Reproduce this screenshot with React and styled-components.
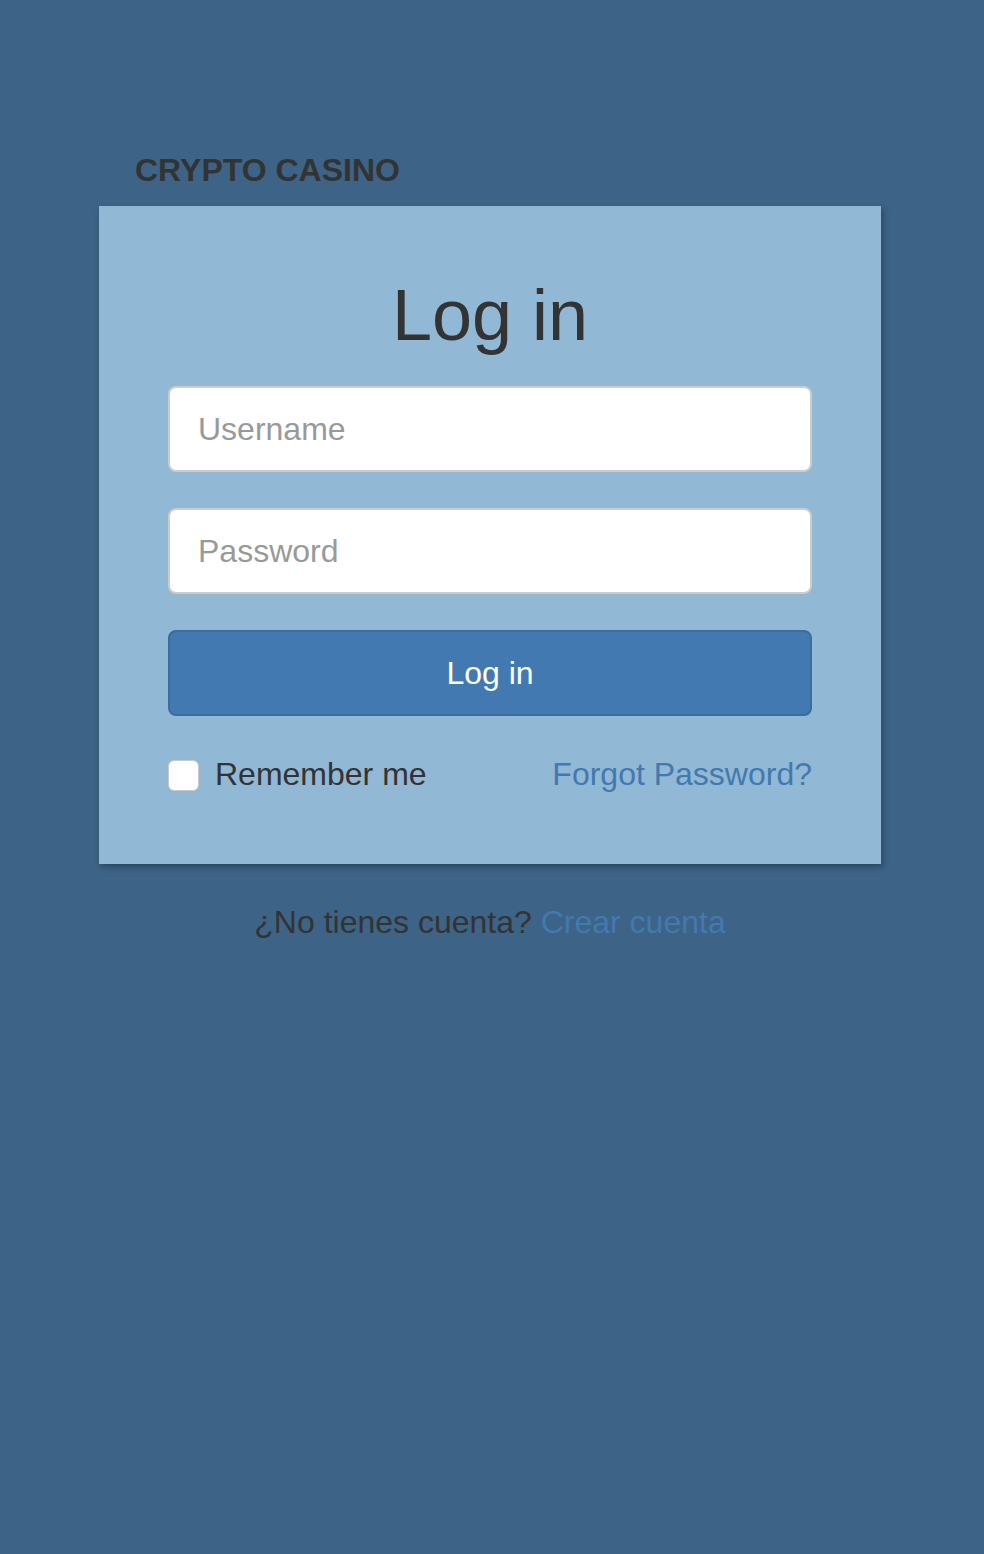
import React from "react";
import styled, { createGlobalStyle } from "styled-components";

const Global = createGlobalStyle`
  html, body { margin: 0; padding: 0; }
  body {
    background: #3d6386;
    font-family: "Liberation Sans", Arial, Helvetica, sans-serif;
    color: #333;
    min-height: 1554px;
  }
  * { box-sizing: border-box; }
`;

const Page = styled.div`
  padding: 152px 0 0 99px;
  width: 881px;
`;

const Brand = styled.div`
  font-size: 32px;
  font-weight: 700;
  line-height: 36px;
  color: #333;
  padding-left: 36px;
  margin-bottom: 18px;
`;

const Card = styled.form`
  width: 782px;
  background: #91b8d5;
  padding: 70px 69px 70px;
  box-shadow: 2px 3px 6px rgba(0, 0, 0, 0.3);
  display: flex;
  flex-direction: column;
`;

const Title = styled.h1`
  margin: 0 0 31px;
  font-size: 72px;
  font-weight: 400;
  line-height: 1.1;
  text-align: center;
  color: #333;
`;

const Input = styled.input`
  height: 86px;
  width: 100%;
  border: 2px solid #cccccc;
  border-radius: 8px;
  background: #fff;
  padding: 0 28px;
  font-family: inherit;
  font-size: 32px;
  color: #555;
  margin-bottom: ${(p) => p.$mb || 0}px;
  outline: none;
  &::placeholder { color: #999; }
`;

const Button = styled.button`
  height: 86px;
  width: 100%;
  background: #4279b0;
  border: 2px solid #3a6ca0;
  border-radius: 8px;
  color: #fff;
  font-family: inherit;
  font-size: 32px;
  cursor: pointer;
`;

const Row = styled.div`
  margin-top: 38px;
  height: 40px;
  display: flex;
  align-items: center;
  justify-content: space-between;
`;

const Check = styled.label`
  display: flex;
  align-items: center;
  gap: 16px;
  font-size: 32px;
  color: #333;
`;

const Box = styled.span`
  width: 31px;
  height: 31px;
  border-radius: 6px;
  background: #fff;
  border: 1px solid #c8c8c8;
  margin-top: 3px;
`;

const Link = styled.a`
  color: #4279b0;
  font-size: 32px;
  text-decoration: none;
`;

const Footer = styled.p`
  margin: 38px 0 0;
  text-align: center;
  font-size: 32px;
  line-height: 40px;
  color: #333;
`;

export default function App() {
  return (
    <>
      <Global />
      <Page>
        <Brand>CRYPTO CASINO</Brand>
        <Card onSubmit={(e) => e.preventDefault()}>
          <Title>Log in</Title>
          <Input placeholder="Username" $mb={36} />
          <Input type="password" placeholder="Password" $mb={36} />
          <Button type="submit">Log in</Button>
          <Row>
            <Check>
              <Box />
              Remember me
            </Check>
            <Link href="#">Forgot Password?</Link>
          </Row>
        </Card>
        <Footer>
          ¿No tienes cuenta? <Link href="#">Crear cuenta</Link>
        </Footer>
      </Page>
    </>
  );
}
